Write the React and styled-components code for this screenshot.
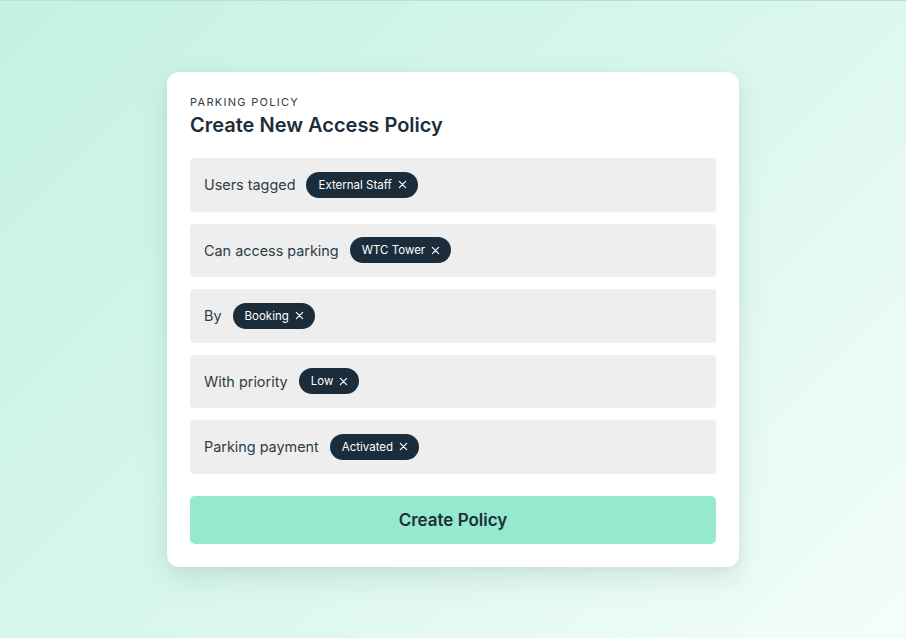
import React from "react";
import styled, { createGlobalStyle } from "styled-components";

const Global = createGlobalStyle`
  html, body { margin: 0; padding: 0; }
  body {
    font-family: Inter, "Noto Sans", sans-serif;
    -webkit-font-smoothing: antialiased;
  }
`;

const Page = styled.div`
  width: 906px;
  height: 638px;
  box-sizing: border-box;
  border-top: 1px solid #b6e2d4;
  background: linear-gradient(135deg, #c4f1e2 0%, #d6f6ec 45%, #f4fdfa 100%);
  display: flex;
  justify-content: center;
  padding-top: 71px;
`;

const Card = styled.div`
  width: 572px;
  height: 495px;
  box-sizing: border-box;
  background: #ffffff;
  border-radius: 12px;
  padding: 23px 23px;
  box-shadow: 0 12px 28px rgba(60, 110, 95, 0.14), 0 2px 6px rgba(60, 110, 95, 0.06);
  display: flex;
  flex-direction: column;
`;

const Eyebrow = styled.div`
  font-size: 11px;
  letter-spacing: 1.3px;
  text-transform: uppercase;
  color: #2f3c45;
  line-height: 15px;
`;

const Title = styled.h1`
  margin: 3px 0 0;
  font-size: 20px;
  font-weight: 600;
  color: #1d2d3a;
  line-height: 24px;
`;

const Rows = styled.div`
  margin-top: 21px;
  display: flex;
  flex-direction: column;
  gap: 12px;
`;

const Row = styled.div`
  height: 53.5px;
  background: #eeeeee;
  border-radius: 4px;
  display: flex;
  align-items: center;
  padding: 0 14px;
  gap: 11px;
`;

const Label = styled.span`
  font-size: 14.4px;
  color: #2f3d47;
`;

const Chip = styled.span`
  height: 26px;
  border-radius: 13px;
  background: #1b2d3b;
  color: #ffffff;
  display: inline-flex;
  align-items: center;
  gap: 6px;
  padding: 0 11px 0 12px;
  font-size: 11.5px;
`;

const Close = styled.svg`
  width: 9px;
  height: 9px;
`;

const Button = styled.button`
  margin-top: 22.5px;
  height: 48px;
  border: none;
  border-radius: 5px;
  background: #94e9cf;
  color: #1e2f38;
  font-family: Inter, "Noto Sans", sans-serif;
  font-size: 17px;
  font-weight: 600;
  cursor: pointer;
`;

const rows = [
  ["Users tagged", "External Staff"],
  ["Can access parking", "WTC Tower"],
  ["By", "Booking"],
  ["With priority", "Low"],
  ["Parking payment", "Activated"],
];

export default function App() {
  return (
    <>
      <Global />
      <Page>
        <Card>
          <Eyebrow>Parking Policy</Eyebrow>
          <Title>Create New Access Policy</Title>
          <Rows>
            {rows.map(([label, chip]) => (
              <Row key={label}>
                <Label>{label}</Label>
                <Chip>
                  {chip}
                  <Close viewBox="0 0 10 10">
                    <path d="M1.5 1.5 L8.5 8.5 M8.5 1.5 L1.5 8.5" stroke="#fff" strokeWidth="1.3" strokeLinecap="round" />
                  </Close>
                </Chip>
              </Row>
            ))}
          </Rows>
          <Button>Create Policy</Button>
        </Card>
      </Page>
    </>
  );
}
